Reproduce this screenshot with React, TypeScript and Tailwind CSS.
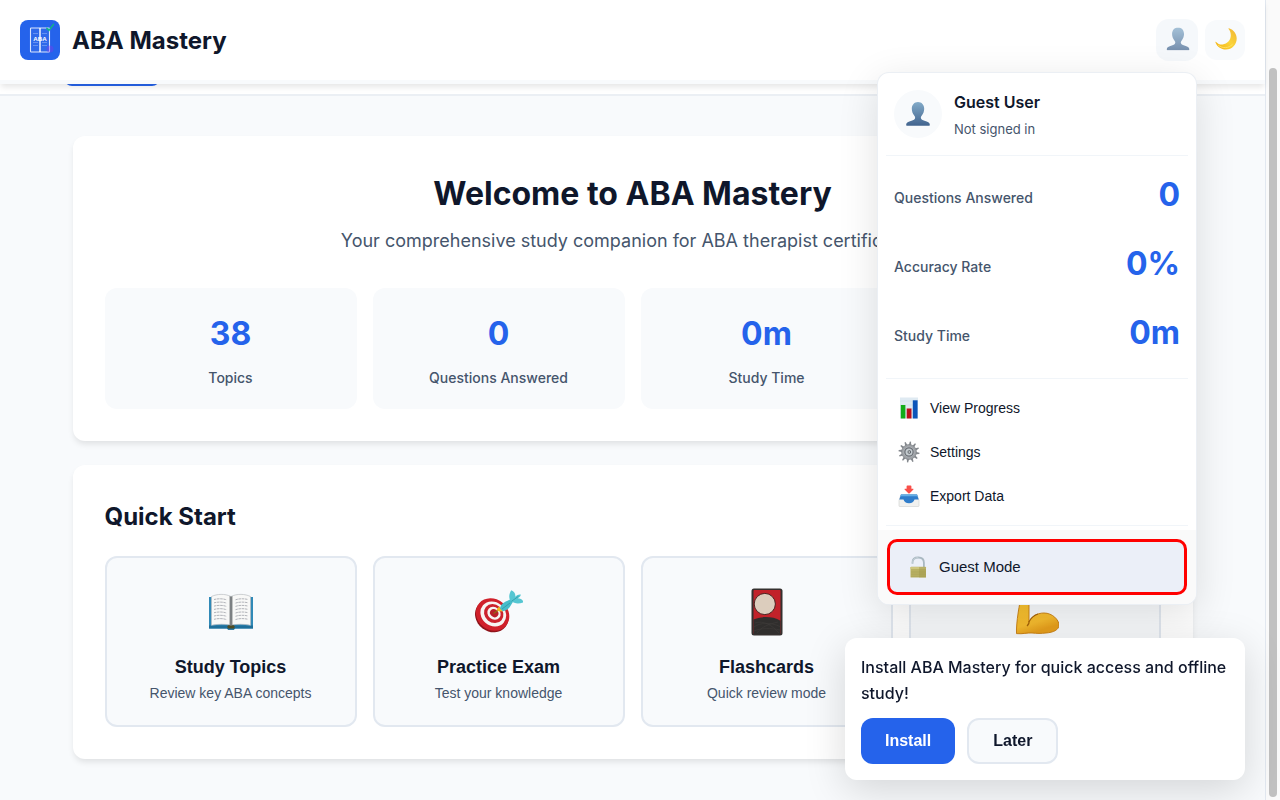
import type { ReactNode } from "react";

const inter = "font-['Inter',sans-serif]";
const arial = "font-['Liberation_Sans',Arial,sans-serif]";

function Logo() {
  return (
    <svg viewBox="0 0 40 40" className="size-10 shrink-0" aria-hidden="true">
      <rect width="40" height="40" rx="8" fill="#2563eb" />
      <rect x="10.5" y="8" width="19" height="24" rx="0.8" fill="#2f69ea" stroke="#dbe6fd" strokeWidth="1.1" />
      <path d="M20 8v24" stroke="#fff" strokeWidth="1.4" />
      <path d="M13 13.5h5M22 13.5h5M13 22.500h5M22 22.500h5M13 25.500h5M22 25.500h5" stroke="#7ca3f4" strokeWidth="0.7" />
      <circle cx="30" cy="29" r="3.500" fill="#7c3aed" opacity="0.4" />
      <text x="20" y="21.200" textAnchor="middle" fontFamily="Liberation Sans, sans-serif" fontWeight="700" fontSize="6.200" fill="#fff">ABA</text>
      <path d="M26.800 8.200l2.200 2.200 4.500-6" fill="none" stroke="#10b981" strokeWidth="1.500" strokeLinecap="round" />
    </svg>
  );
}

function Person({ className }: { className: string }) {
  return (
    <svg viewBox="0 0 24 24" className={className} aria-hidden="true">
      <defs>
        <linearGradient id="bust" x1="0" y1="0" x2="0" y2="1">
          <stop offset="0" stopColor="#83abc9" />
          <stop offset="1" stopColor="#42648e" />
        </linearGradient>
      </defs>
      <path fill="url(#bust)" d="M12 0C8.300 0 5.800 2.800 5.800 6.800c0 2.500.9 5 2.400 6.700.8.9 1 1.700.9 2.500-.2 1.500-1.600 2.200-3.600 2.800C2.300 19.700.3 20.500.1 23c0 .6.3.8.9.8h22c.6 0 .9-.2.9-.8-.2-2.500-2.200-3.300-5.400-4.200-2-.6-3.400-1.300-3.600-2.800-.1-.8.1-1.600.9-2.500 1.500-1.700 2.400-4.200 2.400-6.700C18.200 2.800 15.700 0 12 0z" />
    </svg>
  );
}

function Moon() {
  return (
    <svg viewBox="0 0 22 22" className="size-[22px]" aria-hidden="true">
      <defs>
        <linearGradient id="moon" x1="0.2" y1="0.9" x2="0.9" y2="0.2">
          <stop offset="0" stopColor="#f5b91c" />
          <stop offset="0.5" stopColor="#fbd43a" />
          <stop offset="1" stopColor="#f3bd36" />
        </linearGradient>
      </defs>
      <path fill="url(#moon)" d="M14 .3c4.700 1.500 7.700 5.700 7.700 10.300 0 6.200-4.700 11-10.800 11C6 21.600 1.900 18.600.4 14.300c-.2-.6.300-.8.7-.4 1.700 1.900 4 2.900 6.500 2.600 4.600-.5 8.200-4.300 8.200-9.200 0-2.400-.8-4.700-2.200-6.300-.3-.5-.1-.9.4-.7z" />
      <path d="M3 17c4.500 3.800 11 3.400 14.600-.8" fill="none" stroke="#ffe66d" strokeWidth="1" opacity="0.8" />
    </svg>
  );
}

function Chart() {
  return (
    <svg viewBox="0 0 22 22" className="size-[22px]" aria-hidden="true">
      <rect x="2" y="0.500" width="18" height="21" fill="#dfeaf2" />
      <path d="M2 4h18M2 8h18M2 12h18M2 16h18" stroke="#cfdde8" strokeWidth="0.600" />
      <rect x="2.800" y="8" width="4.600" height="13.500" fill="#12ac18" />
      <rect x="8.700" y="11.500" width="4.800" height="10" fill="#bd101b" />
      <rect x="14.800" y="3.300" width="4.800" height="18.200" fill="#0d55b9" />
    </svg>
  );
}

function Gear() {
  return (
    <svg viewBox="0 0 22 22" className="size-[22px]" aria-hidden="true">
      {[0, 30, 60, 90, 120, 150].map((a) => (
        <path key={a} d="M9.900 3.500l.5-3h1.200l.5 3v15l-.5 3h-1.200l-.5-3z" fill="#85898e" transform={`rotate(${a + 8} 11 11)`} />
      ))}
      <circle cx="11" cy="11" r="7.500" fill="#9da1a5" stroke="#7d8186" strokeWidth="0.600" />
      <circle cx="11" cy="11" r="5.200" fill="#6d7278" stroke="#b4b8bc" strokeWidth="0.800" />
      <circle cx="11" cy="11" r="3.500" fill="#c4cbcf" />
      <circle cx="11.300" cy="11" r="1.800" fill="#53595f" />
      <path d="M10.700 9.800l1.600 1.200-1.600 1.300z" fill="#eceef0" />
    </svg>
  );
}

function Tray() {
  return (
    <svg viewBox="0 0 22 22" className="size-[22px]" aria-hidden="true">
      <path d="M3 9.500h16l2 6v5.300c0 .5-.3.700-.7.700H1.700c-.4 0-.7-.2-.7-.7v-5.300z" fill="#f1f1ef" stroke="#cfd0ce" strokeWidth="0.600" />
      <path d="M3 9.500h16l1.700 5h-4.200c-.6 2-2.500 3.800-5.500 3.800s-4.900-1.800-5.500-3.800H1.300z" fill="#2f7dcb" />
      <path d="M3 9.500h16l.6 1.700H2.400z" fill="#63afe7" />
      <path d="M8.600 1.200c0-.4.300-.6.700-.6h3.400c.4 0 .7.200.7.600v2.500h1.400c.7 0 .9.600.4 1.100l-3.500 3.400c-.4.4-1 .4-1.400 0L6.800 4.800c-.5-.5-.3-1.100.4-1.100h1.400z" fill="#f94f49" />
    </svg>
  );
}

function Padlock() {
  return (
    <svg viewBox="0 0 22 22" className="size-[22px]" aria-hidden="true">
      <path d="M5.500 7.800V6.500C5.500 3.300 8 1.500 11.300 1.500s5.600 2 5.600 5.300V11" fill="none" stroke="#a9b8c1" strokeWidth="1.800" />
      <path d="M5.500 7.500v-1C5.500 3.300 8 1.500 11.300 1.500" fill="none" stroke="#d4dee2" strokeWidth="0.600" />
      <rect x="3.500" y="10.800" width="15.500" height="10.800" rx="0.700" fill="#b9b163" />
      <path d="M3.500 11h15.500v2H3.500z" fill="#cdc57e" />
      <path d="M12 11h7v10.600h-7z" fill="#a39c50" opacity="0.5" />
      <path d="M4 16h14.500M4 18.200h14.500M4 20.300h14.500" stroke="#9f974f" strokeWidth="0.400" />
    </svg>
  );
}

function Book() {
  return (
    <svg viewBox="0 0 48 48" className="size-12" aria-hidden="true">
      <path d="M2 9h44v31.500H28l-1.200 1.300h-5.600L20 40.500H2z" fill="#3089b7" />
      <path d="M2 37.500h44v3H28l-1.200 1.300h-5.600L20 40.500H2z" fill="#1f6f9a" />
      <path d="M4.500 8.500C10 5.800 18 5.500 24 8.500c6-3 14-2.700 19.500 0v28.800c-6-1.300-14-1.500-19.500 0-5.500-1.500-13.500-1.300-19.500 0z" fill="#f8f8f7" stroke="#b9bdc1" strokeWidth="0.700" />
      <rect x="20.500" y="37.200" width="7" height="3.300" rx="1" fill="#514c22" />
      <path d="M22.500 8L24 8.800l1.500-.8v29L24 37.500 22.500 37z" fill="#8c8f92" />
      <path d="M24 8.500v29" stroke="#66696c" strokeWidth="0.800" />
      {[0, 1, 2, 3, 4, 5, 6].map((i) => (
        <g key={i} stroke="#a9abb2" strokeWidth="0.900" strokeDasharray="2.500 0.600" transform={`translate(0 ${i * 3.3})`}>
          <path d="M7 11.500c4-1 9-1 12.500.3" fill="none" />
          <path d="M28.500 11.800c3.500-1.300 8.500-1.300 12.500-.3" fill="none" />
        </g>
      ))}
    </svg>
  );
}

function Target() {
  return (
    <svg viewBox="0 0 48 48" className="size-12" aria-hidden="true">
      <ellipse cx="16.800" cy="28" rx="17.500" ry="15.500" transform="rotate(38 16.800 28)" fill="#8f141b" />
      <ellipse cx="17.600" cy="26.500" rx="17.500" ry="15.500" transform="rotate(40 17.600 26.500)" fill="#d0202a" />
      <ellipse cx="18.300" cy="26" rx="13.500" ry="11.900" transform="rotate(40 18.300 26)" fill="#f7f4f2" />
      <ellipse cx="18.700" cy="25.600" rx="10.200" ry="9" transform="rotate(40 18.700 25.600)" fill="#cc222c" />
      <ellipse cx="19" cy="25.300" rx="7" ry="6.100" transform="rotate(40 19 25.300)" fill="#f7f4f2" />
      <ellipse cx="19.200" cy="25.200" rx="4.400" ry="3.800" transform="rotate(40 19.200 25.200)" fill="#b91f28" />
      <path d="M18.500 25.500l6.500-4.500" stroke="#8f6b14" strokeWidth="1.200" />
      <path d="M24 18.500l4 4.700-3.700.2-2.800-1.300z" fill="#f1bd24" />
      <path d="M25 20.500c.6-3.600 3.500-6.300 7-7.500l4.500-2.200 2 2.200-2.500 4c-1.600 3.700-4.700 6-8.300 6.300z" fill="#46bdca" />
      <path d="M35.800 13c-2.300-3-2-6.800.5-10.800 3 1.300 4.400 3.600 4 6.600 1.800-2 3.700-2.600 5.500-2.200-.2 1.600-1.200 2.900-3 3.700 3 .2 5 1.700 6 4-4.600 1.600-9 1.800-13-1.300z" fill="#55c6d2" />
      <path d="M36.500 13.300l7-5M27 21l8-6" stroke="#2c98a7" strokeWidth="0.800" />
    </svg>
  );
}

function FlowerCard() {
  return (
    <svg viewBox="0 0 48 48" className="size-12" aria-hidden="true">
      <rect x="8.500" y="0.500" width="31" height="47" rx="2.500" fill="#35302f" />
      <path d="M10.500 3c0-.6.4-1 1-1h25c.6 0 1 .4 1 1v42.500h-27z" fill="#c2222a" />
      <path d="M10.500 31.500c7-3.300 19-3.500 27 1.200V45c0 .6-.4 1-1 1h-25c-.6 0-1-.4-1-1z" fill="#302e2d" />
      <path d="M11 39c6-4.500 16-5 26-.5M11 43c6-3 18-3 26-1M12 35c8-3 17 2 24 10M14 45c4-6 12-9 21-11" fill="none" stroke="#403d3b" strokeWidth="0.600" />
      <circle cx="21.800" cy="16" r="10.600" fill="#dccdbd" stroke="#4b2321" strokeWidth="1" />
    </svg>
  );
}

function Muscle() {
  return (
    <svg viewBox="0 0 48 48" className="size-12" aria-hidden="true">
      <defs>
        <linearGradient id="skin" x1="0" y1="0" x2="0.300" y2="1">
          <stop offset="0" stopColor="#fbc62f" />
          <stop offset="0.800" stopColor="#f7bd2f" />
          <stop offset="1" stopColor="#e8a01c" />
        </linearGradient>
      </defs>
      <path d="M11 4c2-4 9-4 11 0 1.500 3 1 6-1.500 8L18 14v20c2.500-5 7.500-9 15-9 8.500 0 15 7 15 12 0 5-6 7.500-13 8-5 .6-9 .5-14 0-5-.4-9 1.200-15.500.6C5 34 8.500 16 11 4z" fill="url(#skin)" stroke="#c77d0e" strokeWidth="0.900" />
      <path d="M18 33c.3 1.800-.3 3.600-2 5M18 34c1.500-3.500 4.500-6.500 9-8" fill="none" stroke="#a8660a" strokeWidth="1.200" />
    </svg>
  );
}

function MenuItem({ icon, label }: { icon: ReactNode; label: string }) {
  return (
    <button type="button" className={`flex h-11 w-full items-center gap-2.5 px-3 text-left text-sm text-slate-900 ${arial}`}>
      {icon}
      {label}
    </button>
  );
}

const stats = [
  { value: "38", label: "Topics" },
  { value: "0", label: "Questions Answered" },
  { value: "0m", label: "Study Time" },
];

const actions = [
  { icon: <Book />, title: "Study Topics", text: "Review key ABA concepts" },
  { icon: <Target />, title: "Practice Exam", text: "Test your knowledge" },
  { icon: <FlowerCard />, title: "Flashcards", text: "Quick review mode" },
];

const userStats = [
  { value: "0", label: "Questions Answered" },
  { value: "0%", label: "Accuracy Rate" },
  { value: "0m", label: "Study Time" },
];

function UserMenu() {
  return (
    <div className="absolute top-[52px] right-0 z-20 w-80 overflow-hidden rounded-xl border border-slate-200/70 bg-white shadow-[0_10px_40px_rgba(0,0,0,0.12)]">
      <div className="mx-2 flex h-[83px] items-center gap-3 border-b border-slate-100 px-2">
        <div className="flex size-12 items-center justify-center rounded-full bg-slate-50">
          <Person className="size-6" />
        </div>
        <div>
          <div className="text-base leading-[26px] font-semibold text-slate-900">Guest User</div>
          <div className="mt-1 text-[13px] leading-[21px] text-slate-600">Not signed in</div>
        </div>
      </div>
      <dl className="mx-2 border-b border-slate-100 px-2 pt-[7px] pb-2">
        {userStats.map((s) => (
          <div key={s.label} className="flex h-[69px] items-center justify-between">
            <dt className="text-sm font-medium text-slate-600">{s.label}</dt>
            <dd className="mb-1.5 text-[32px] leading-[51px] font-bold text-[#2563eb]">{s.value}</dd>
          </div>
        ))}
      </dl>
      <div className="mx-2 border-b border-slate-100 py-[7px]">
        <MenuItem icon={<Chart />} label="View Progress" />
        <MenuItem icon={<Gear />} label="Settings" />
        <MenuItem icon={<Tray />} label="Export Data" />
      </div>
      <div className="mt-1 bg-neutral-50 px-[9px] py-[9px]">
        <button type="button" className={`flex h-14 w-full items-center gap-2.5 rounded-[10px] border-3 border-[#ff0000] bg-[#ebeff8] px-[17px] text-left text-[15px] text-slate-900 ${arial}`}>
          <Padlock />
          Guest Mode
        </button>
      </div>
    </div>
  );
}

function InstallPrompt() {
  return (
    <aside className="fixed right-[35px] bottom-5 z-30 w-[400px] rounded-xl bg-white p-4 shadow-[0_10px_40px_rgba(0,0,0,0.15)]">
      <p className="text-base leading-[26px] font-medium text-slate-900">
        Install ABA Mastery for quick access and offline study!
      </p>
      <div className={`mt-3 flex gap-3 text-base font-bold ${arial}`}>
        <button type="button" className="h-[46px] rounded-xl bg-[#2563eb] px-6 text-white">Install</button>
        <button type="button" className="h-[46px] rounded-xl border-2 border-slate-200 bg-slate-50 px-6 text-slate-900">Later</button>
      </div>
    </aside>
  );
}

export default function App() {
  return (
    <div className={`flex h-screen overflow-hidden bg-slate-50 text-slate-900 ${inter}`}>
      <div className="min-w-0 flex-1">
        <header className="relative z-20 border-b-4 border-slate-50 bg-white shadow-[0_4px_6px_-1px_rgba(0,0,0,0.1)]">
          <div className="flex h-20 items-center justify-between px-5">
            <div className="flex items-center gap-3">
              <Logo />
              <span className="text-2xl leading-[39px] font-bold">ABA Mastery</span>
            </div>
            <div className="flex gap-2">
              <div className="relative">
                <button type="button" aria-label="Account" className="flex size-10 scale-105 items-center justify-center rounded-xl bg-slate-100/70 pb-0.5 pl-0.5">
                  <Person className="size-[22px] opacity-70" />
                </button>
                <UserMenu />
              </div>
              <button type="button" aria-label="Dark mode" className="flex size-10 items-center justify-center rounded-xl bg-slate-50 pb-0.5 pl-0.5">
                <Moon />
              </button>
            </div>
          </div>
        </header>

        <nav className="flex h-3 items-start overflow-hidden border-b-2 border-slate-200/70 bg-white px-16">
          <div className="relative h-[2px] w-24 overflow-hidden">
            <div className="absolute bottom-0 h-8 w-full rounded-lg bg-[#2563eb]" />
          </div>
        </nav>

        <main className="mx-auto flex max-w-[1200px] flex-col gap-6 px-10 py-10">
          <section className="rounded-xl bg-white p-8 text-center shadow-[0_4px_6px_-1px_rgba(0,0,0,0.1)]">
            <h1 className="mb-2 text-[32px] leading-[51px] font-bold">Welcome to ABA Mastery</h1>
            <p className="mb-[33px] text-lg leading-7 text-slate-600">
              Your comprehensive study companion for ABA therapist certification
            </p>
            <div className="grid grid-cols-4 gap-4">
              {stats.map((s) => (
                <div key={s.label} className="rounded-xl bg-slate-50 p-5">
                  <div className="mb-2 text-[32px] leading-[51px] font-bold text-[#2563eb]">{s.value}</div>
                  <div className="text-sm leading-[22px] font-medium text-slate-600">{s.label}</div>
                </div>
              ))}
              <div className="rounded-xl bg-slate-50" />
            </div>
          </section>

          <section className="rounded-xl bg-white p-8 shadow-[0_4px_6px_-1px_rgba(0,0,0,0.1)]">
            <h2 className="mb-5 text-2xl leading-[39px] font-bold">Quick Start</h2>
            <div className="grid grid-cols-4 gap-4">
              {actions.map((a) => (
                <button key={a.title} type="button" className={`flex h-[171px] flex-col items-center rounded-xl border-2 border-slate-200 bg-slate-50 pt-[30px] ${arial}`}>
                  {a.icon}
                  <span className="mt-[21px] text-lg leading-5 font-bold">{a.title}</span>
                  <span className="mt-2 text-sm leading-4 text-slate-600">{a.text}</span>
                </button>
              ))}
              <button type="button" aria-label="Strengthen" className="flex h-[171px] flex-col items-center rounded-xl border-2 border-slate-200 bg-slate-50 pt-[30px]">
                <Muscle />
              </button>
            </div>
          </section>
        </main>
      </div>

      <div className="flex w-[15px] shrink-0 flex-col items-center border-l border-slate-200 bg-neutral-50 pt-[68px] pb-[3px]" aria-hidden="true">
        <div className="w-2 flex-1 rounded-full bg-[#c1c1c1]" />
      </div>

      <InstallPrompt />
    </div>
  );
}
